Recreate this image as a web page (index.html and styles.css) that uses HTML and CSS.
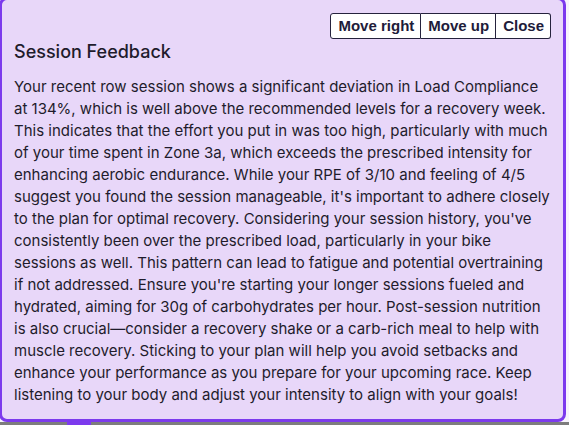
FILE: index.html
```html
<!DOCTYPE html>
<html lang="en">
<head>
  <meta charset="UTF-8" />
  <meta name="viewport" content="width=device-width, initial-scale=1" />
  <title>Session Feedback</title>
  <link rel="stylesheet" href="styles.css">
</head>
<body>
  <div class="feedback-panel">
    <div class="panel-actions">
      <button>Move right</button>
      <button>Move up</button>
      <button>Close</button>
    </div>

    <h2>Session Feedback</h2>

    <p>Your recent row session shows a significant deviation in Load Compliance at 134%, which is well above the recommended levels for a recovery week. This indicates that the effort you put in was too high, particularly with much of your time spent in Zone 3a, which exceeds the prescribed intensity for enhancing aerobic endurance. While your RPE of 3/10 and feeling of 4/5 suggest you found the session manageable, it's important to adhere closely to the plan for optimal recovery. Considering your session history, you've consistently been over the prescribed load, particularly in your bike sessions as well. This pattern can lead to fatigue and potential overtraining if not addressed. Ensure you're starting your longer sessions fueled and hydrated, aiming for 30g of carbohydrates per hour. Post-session nutrition is also crucial—consider a recovery shake or a carb-rich meal to help with muscle recovery. Sticking to your plan will help you avoid setbacks and enhance your performance as you prepare for your upcoming race. Keep listening to your body and adjust your intensity to align with your goals!</p>
  </div>

  <div class="dock">
    <span class="dock-tab"></span>
  </div>
</body>
</html>
```

FILE: styles.css
```css
body {
  margin: 0;
  font-family: 'Inter', 'Noto Sans', sans-serif;
  background: #f7f4fb;
  color: #1f1c2c;
  overflow: hidden;
  height: 425px;
}

.feedback-panel {
  box-sizing: border-box;
  height: 425px;
  margin: -3px 3px 0 -1px;
  padding: 13px 12px 0 12px;
  background: #e8d7f9;
  border: 3px solid #7c3aed;
  border-radius: 8px;
}

.panel-actions {
  display: flex;
  justify-content: flex-end;
}

.panel-actions button {
  font-family: 'Liberation Sans', Arial, sans-serif;
  font-size: 15px;
  font-weight: 700;
  color: #1e1b3a;
  background: #fff;
  border: 1px solid #25223d;
  border-radius: 0;
  padding: 3px 6px 3px 7px;
  height: 26px;
  line-height: 18px;
  cursor: pointer;
}

.panel-actions button + button {
  border-left: none;
}

.panel-actions button:first-child {
  border-radius: 3px 0 0 3px;
}

.panel-actions button:last-child {
  border-radius: 0 3px 3px 0;
}

h2 {
  font-size: 18px;
  font-weight: 500;
  line-height: 22px;
  margin: 2px 0 13px;
}

p {
  font-size: 15px;
  line-height: 22px;
  margin: 0;
}

.dock {
  height: 10px;
  background: #7d7d7d;
  position: relative;
}

.dock-tab {
  position: absolute;
  left: 67px;
  top: 0;
  width: 24px;
  height: 10px;
  background: #7c3aed;
}
```
